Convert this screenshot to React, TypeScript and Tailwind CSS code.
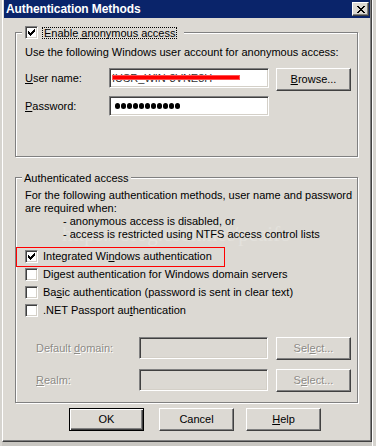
import type { ReactNode } from 'react';

const sunken =
    'border border-t-[#808080] border-l-[#808080] border-r-white border-b-white shadow-[inset_1px_1px_0_#404040,inset_-1px_-1px_0_#d4d0c8]';
const raised =
    'border border-t-white border-l-white border-r-[#404040] border-b-[#404040] shadow-[inset_-1px_-1px_0_#808080]';
const etched = 'border border-[#808080] shadow-[inset_1px_1px_0_#fff,1px_1px_0_#fff]';
const disabledText = 'text-[#8d8b86] [text-shadow:1px_1px_0_#fff]';

// classic 7x7 tick, row by row
const TICK = ['......#', '.....##', '#...###', '##.###.', '#####..', '.###...', '..#....'];

function CheckBox({ checked }: { checked?: boolean }) {
    return (
        <span className={`relative inline-block w-[13px] h-[13px] shrink-0 bg-white ${sunken}`}>
            {checked && (
                <svg className="absolute left-[2px] top-[2px]" width="7" height="7" viewBox="0 0 7 7" shapeRendering="crispEdges">
                    {TICK.map((row, y) =>
                        row.split('').map((c, x) =>
                            c === '#' ? <rect key={`${x}-${y}`} x={x} y={y} width="1" height="1" fill="#000" /> : null
                        )
                    )}
                </svg>
            )}
        </span>
    );
}

function Button({ children, className = '', disabled, isDefault }: { children: ReactNode; className?: string; disabled?: boolean; isDefault?: boolean }) {
    const frame = isDefault
        ? 'border border-black shadow-[inset_1px_1px_0_#fff,inset_-1px_-1px_0_#404040,inset_-2px_-2px_0_#808080]'
        : raised;
    return (
        <div className={`w-[75px] h-[23px] shrink-0 flex items-center justify-center ${frame} ${disabled ? disabledText : ''} ${className}`}>
            {children}
        </div>
    );
}

export default function App() {
    return (
        <div className="w-[376px] h-[446px] flex overflow-hidden bg-[#c9c7c2] text-black text-[11px] leading-[13px] [font-family:'Liberation_Sans',Arial,sans-serif]">
            {/* window behind, left */}
            <div className="w-[2px] h-full shrink-0 bg-[#d6d4cf]" />

            {/* dialog frame */}
            <div className="w-[370px] h-[442px] shrink-0 flex flex-col border-l border-l-white border-r border-r-[#404040] border-b border-b-[#404040]">
                <div className="flex-1 flex flex-col pl-[1px] bg-[#dcd9d3] border-r border-r-[#808080] border-b border-b-[#808080]">
                    {/* Title bar */}
                    <div className="h-[18px] shrink-0 flex items-center justify-between bg-[#0a246a] pl-[2px] pr-[1px]">
                        <span className="text-white font-bold text-[12px] tracking-[-0.1px]">Authentication Methods</span>
                        <div className={`w-[17px] h-[14px] bg-[#dcd9d3] flex items-center justify-center ${raised}`}>
                            <svg width="8" height="7" viewBox="0 0 8 7" shapeRendering="crispEdges">
                                <path d="M0 0h2v1h1v1h2v-1h1v-1h2v1h-1v1h-1v1h-1v1h1v1h1v1h1v1h-2v-1h-1v-1h-2v1h-1v1h-2v-1h1v-1h1v-1h1v-1h-1v-1h-1v-1h-1z" fill="#000" />
                            </svg>
                        </div>
                    </div>

                    {/* Body */}
                    <div className="flex flex-col pl-[11px]">
                        {/* Anonymous access group */}
                        <div className={`relative mt-[14px] w-[343px] h-[125px] pl-[9px] pt-[13px] ${etched}`}>
                            <div className="absolute left-[6px] -top-[7px] flex items-center gap-[4px] bg-[#dcd9d3] pl-[3px] pr-[7px]">
                                <CheckBox checked />
                                <span className="border border-dotted border-black px-[1px] leading-[10px] h-[12px] flex items-center">
                                    <span>Enable <u>a</u>nonymous access</span>
                                </span>
                            </div>
                            <p>Use the following Windows user account for anonymous access:</p>

                            <div className="flex items-start mt-[9px] h-[22px]">
                                <span className="w-[84px] pt-[4px]"><u>U</u>ser name:</span>
                                <div className={`relative w-[160px] h-[20px] bg-white overflow-hidden pl-[2px] flex items-center ${sunken}`}>
                                    <span className="whitespace-nowrap text-[#333]">IUSR_WIN-3VNE8H</span>
                                    <span className="absolute left-[2px] top-[6px] w-[128px] h-[5px] bg-[#ff0000] border border-[#ff5050]" />
                                </div>
                                <Button className="ml-[7px] h-[22px]"><span><u>B</u>rowse...</span></Button>
                            </div>

                            <div className="flex items-start mt-[6px] h-[20px]">
                                <span className="w-[84px] pt-[4px]"><u>P</u>assword:</span>
                                <div className={`w-[160px] h-[20px] bg-white pl-[5px] flex items-center gap-[1px] ${sunken}`}>
                                    {Array.from({ length: 11 }).map((_, i) => (
                                        <span key={i} className="w-[5px] h-[6px] rounded-full bg-black" />
                                    ))}
                                </div>
                            </div>
                        </div>

                        {/* Authenticated access group */}
                        <div className={`relative mt-[20px] w-[343px] h-[226px] pl-[9px] pt-[11px] ${etched}`}>
                            <span className="absolute left-[6px] -top-[6px] bg-[#dcd9d3] px-[2px]">Authenticated access</span>

                            {/* faint watermark, behind the text */}
                            <span className="absolute left-[46px] top-[44px] text-[21px] leading-[24px] text-[#e3e1dc] [font-family:'Liberation_Serif',serif] whitespace-nowrap pointer-events-none">
                                https://blog.csdn.net/pcaifo
                            </span>

                            <p className="relative">For the following authentication methods, user name and password</p>
                            <p className="relative">are required when:</p>
                            <p className="relative pl-[38px]">- anonymous access is disabled, or</p>
                            <p className="relative pl-[38px]">- access is restricted using NTFS access control lists</p>

                            {/* red highlight around the first option */}
                            <span className="absolute left-0 top-[69px] w-[209px] h-[20px] border border-[#ff0000]" />

                            <div className="flex flex-col mt-[6px]">
                                <label className="h-[18px] flex items-center gap-[5px]">
                                    <CheckBox checked />
                                    <span>Integrated Wi<u>n</u>dows authentication</span>
                                </label>
                                <label className="h-[18px] flex items-center gap-[5px]">
                                    <CheckBox />
                                    <span>Di<u>g</u>est authentication for Windows domain servers</span>
                                </label>
                                <label className="h-[18px] flex items-center gap-[5px]">
                                    <CheckBox />
                                    <span>Ba<u>s</u>ic authentication (password is sent in clear text)</span>
                                </label>
                                <label className="h-[18px] flex items-center gap-[5px]">
                                    <CheckBox />
                                    <span>.NET Passport au<u>t</u>hentication</span>
                                </label>
                            </div>

                            <div className="flex items-start mt-[18px] h-[23px]">
                                <span className={`w-[114px] pl-[11px] pt-[5px] ${disabledText}`}>Default <u>d</u>omain:</span>
                                <div className={`w-[129px] h-[22px] ${sunken}`} />
                                <Button disabled className="ml-[8px]"><span>Sel<u>e</u>ct...</span></Button>
                            </div>
                            <div className="flex items-start mt-[9px] h-[23px]">
                                <span className={`w-[114px] pl-[11px] pt-[5px] ${disabledText}`}><u>R</u>ealm:</span>
                                <div className={`w-[129px] h-[22px] ${sunken}`} />
                                <Button disabled className="ml-[8px]"><span>S<u>e</u>lect...</span></Button>
                            </div>
                        </div>
                    </div>

                    {/* Dialog buttons */}
                    <div className="flex mt-[5px]">
                        <Button isDefault className="ml-[65px]">OK</Button>
                        <Button className="ml-[15px]">Cancel</Button>
                        <Button className="ml-[12px]"><span><u>H</u>elp</span></Button>
                    </div>
                </div>
            </div>

            {/* window behind, right */}
            <div className="w-[4px] h-full shrink-0 bg-[#d6d4cf] border-l border-l-white" />
        </div>
    );
}
